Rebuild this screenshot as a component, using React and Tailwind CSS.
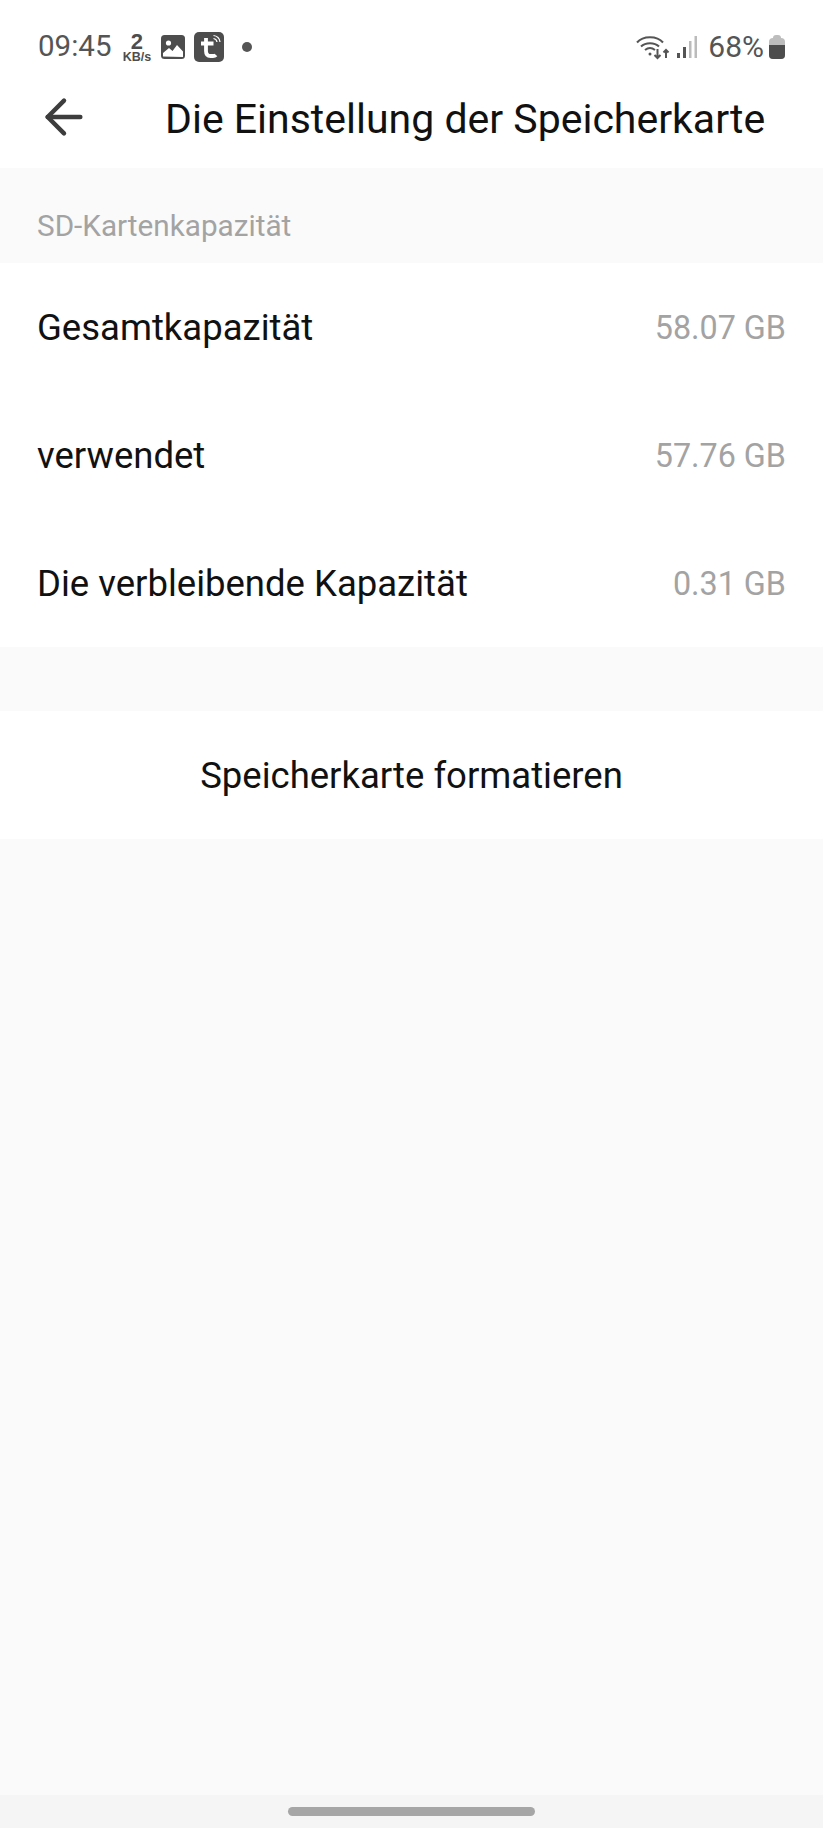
import { ArrowLeft } from 'lucide-react';

const rows = [
  { label: 'Gesamtkapazität', value: '58.07 GB' },
  { label: 'verwendet', value: '57.76 GB' },
  { label: 'Die verbleibende Kapazität', value: '0.31 GB' },
];

function TuyaIcon() {
  return (
    <svg width="30" height="30" viewBox="0 0 30 30">
      <rect width="30" height="30" rx="5" fill="#4d4d4d" />
      <path d="M12 6v13c0 3.500 2 5 4.500 5h2.500c1.500 0 2.500-.5 3-1M7 11.500h12.500" fill="none" stroke="#fff" strokeWidth="3.800" />
      <path d="M19.500 3.500a7 7 0 0 1 6.500 6.500M19.500 6.500a4 4 0 0 1 3.500 3.500" fill="none" stroke="#fff" strokeWidth="1.200" />
    </svg>
  );
}

function GalleryIcon() {
  return (
    <svg width="24" height="24" viewBox="0 0 24 24">
      <rect width="24" height="24" rx="3.500" fill="#4d4d4d" />
      <circle cx="7.500" cy="8" r="2.600" fill="#fff" />
      <path d="M2 21.500v-3.500l6-5 3.500 3 4.500-6 6 6.500v5.500z" fill="#fff" />
      <path d="M4 19.500l4-3.500 3.500 3 4.500-5.500 4.500 4.500v2z" fill="#fff" />
    </svg>
  );
}

function WifiIcon() {
  return (
    <svg width="34" height="26" viewBox="0 0 34 26" fill="none" stroke="#555" strokeWidth="2">
      <path d="M1 8.500C7 1.500 21 1.500 27 8.500" />
      <path d="M5 12.500c4.500-4.500 13.500-4.500 18 0" />
      <path d="M9 16c3-2.500 7-2.500 10 0" />
      <circle cx="14" cy="20" r="1.500" fill="#555" stroke="none" />
      <path d="M21.500 15v9M18.500 21l3 3 3-3" />
      <path d="M30 24v-8M27.500 18.500l2.500-2.500 2.500 2.500" />
    </svg>
  );
}

function SignalIcon() {
  return (
    <svg width="20" height="22" viewBox="0 0 20 22">
      <rect x="0" y="17" width="3" height="5" fill="#555" />
      <rect x="6" y="11" width="3" height="11" fill="#555" />
      <rect x="12" y="5" width="2.500" height="17" fill="#bbb" />
      <rect x="17.500" y="0" width="2.500" height="22" fill="#bbb" />
    </svg>
  );
}

function BatteryIcon() {
  return (
    <div className="flex flex-col items-center w-4">
      <div className="w-2 h-[3px] bg-[#bdbdbd] rounded-t-sm" />
      <div className="w-4 h-[21px] rounded-sm bg-[#bdbdbd] flex flex-col justify-end overflow-hidden">
        <div className="h-[14px] bg-[#4d4d4d]" />
      </div>
    </div>
  );
}

export default function App() {
  return (
    <div className="min-h-[1828px] flex flex-col bg-[#fafafa] font-['Roboto',sans-serif]">
      <div className="bg-white h-[168px] shrink-0">
        <div className="h-[70px] pt-8 pl-[38px] pr-[38px] flex items-start justify-between">
          <div className="flex items-center h-[30px]">
            <span className="text-[29.500px] leading-none text-[#555]">09:45</span>
            <div className="flex flex-col items-center ml-[11px] w-[29px] text-[#4d4d4d] font-['Liberation_Sans',sans-serif]">
              <span className="text-[22px] leading-[20px] font-bold">2</span>
              <span className="text-[12.500px] leading-[10px] font-bold whitespace-nowrap">KB/s</span>
            </div>
            <div className="ml-[10px]"><GalleryIcon /></div>
            <div className="ml-[9px]"><TuyaIcon /></div>
            <div className="ml-[18px] w-[10px] h-[10px] rounded-full bg-[#555]" />
          </div>
          <div className="flex items-center h-[30px]">
            <WifiIcon />
            <div className="ml-[7px]"><SignalIcon /></div>
            <span className="ml-[11px] text-[30px] leading-none text-[#555]">68%</span>
            <div className="ml-[5px]"><BatteryIcon /></div>
          </div>
        </div>
        <div className="relative h-[98px] flex items-start">
          <ArrowLeft className="absolute left-[36px] top-[19px] text-[#3d3d3d]" size={56} strokeWidth={1.900} />
          <h1 className="ml-[165px] mt-[25px] text-[41px] leading-[48px] font-normal text-[#111] whitespace-nowrap">
            Die Einstellung der Speicherkarte
          </h1>
        </div>
      </div>

      <div className="h-[95px] shrink-0 pl-[37px] pt-[41px] text-[29.700px] leading-[34px] text-[#a3a3a3]">
        SD-Kartenkapazität
      </div>

      <div className="bg-white flex flex-col shrink-0">
        {rows.map((row) => (
          <div key={row.label} className="h-[128px] px-[37px] pt-[2px] flex items-center justify-between">
            <span className="text-[36.500px] text-[#111]">{row.label}</span>
            <span className="text-[32.300px] text-[#a3a3a3]">{row.value}</span>
          </div>
        ))}
      </div>

      <div className="mt-[64px] bg-white h-[128px] pt-[2px] shrink-0 flex items-center justify-center">
        <span className="text-[36.500px] text-[#111]">Speicherkarte formatieren</span>
      </div>

      <div className="flex-1" />

      <div className="h-[33px] shrink-0 bg-[#f5f5f5] flex justify-center pt-3">
        <div className="w-[247px] h-[9px] rounded-full bg-[#a6a6a6]" />
      </div>
    </div>
  );
}
